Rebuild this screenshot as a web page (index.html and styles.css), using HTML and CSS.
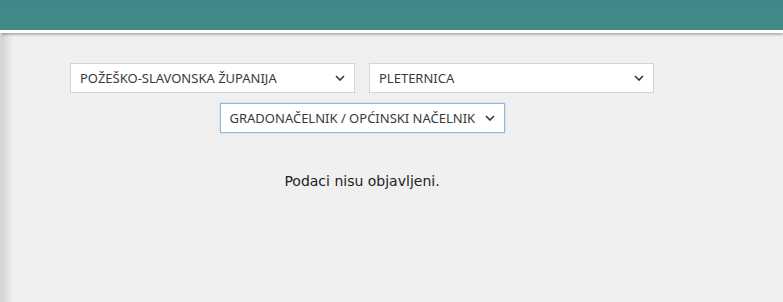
FILE: index.html
```html
<!DOCTYPE html>
<html lang="hr">
<head>
  <meta charset="UTF-8">
  <title>Podaci</title>
  <link rel="stylesheet" href="styles.css">
</head>
<body>
  <div class="topbar"></div>
  <div class="page">
    <div class="filters">
      <div class="row">
        <div class="select">
          <span>POŽEŠKO-SLAVONSKA ŽUPANIJA</span>
          <svg viewBox="0 0 10 6" width="10" height="6"><path d="M1 1l4 4 4-4" fill="none" stroke="#333" stroke-width="1.6"/></svg>
        </div>
        <div class="select">
          <span>PLETERNICA</span>
          <svg viewBox="0 0 10 6" width="10" height="6"><path d="M1 1l4 4 4-4" fill="none" stroke="#333" stroke-width="1.6"/></svg>
        </div>
      </div>
      <div class="row">
        <div class="select focused">
          <span>GRADONAČELNIK / OPĆINSKI NAČELNIK</span>
          <svg viewBox="0 0 10 6" width="10" height="6"><path d="M1 1l4 4 4-4" fill="none" stroke="#333" stroke-width="1.6"/></svg>
        </div>
      </div>
      <p class="message">Podaci nisu objavljeni.</p>
    </div>
  </div>
</body>
</html>
```

FILE: styles.css
```css
body {
  margin: 0;
  background: #f0f0f0;
  font-family: "DejaVu Sans", sans-serif;
  color: #222;
  height: 302px;
  overflow: hidden;
}

.topbar {
  height: 30px;
  background: linear-gradient(#438789, #3e8b86);
  border-bottom: 3px solid #fff;
  box-shadow: 0 2px 2px rgba(0, 0, 0, 0.25);
}

.page {
  height: 269px;
  box-shadow: inset 12px 0 10px -8px rgba(0, 0, 0, 0.15);
  border-left: 2px solid #d6d6d6;
}

.filters {
  width: 720px;
  padding-top: 30px;
  display: flex;
  flex-direction: column;
  align-items: center;
  gap: 10px;
}

.row {
  display: flex;
  gap: 14px;
}

.select {
  width: 285px;
  height: 30px;
  box-sizing: border-box;
  background: #fff;
  border: 1px solid #d4d4d4;
  display: flex;
  align-items: center;
  justify-content: space-between;
  padding: 0 9px 0 9px;
  font-family: "Noto Sans", sans-serif;
  font-size: 13px;
  color: #3a3a3a;
}

.select.focused {
  border-color: #8fb8dc;
  box-shadow: 0 0 2px #aecbe6;
}

.message {
  margin: 30px 0 0;
  font-size: 14px;
  color: #222;
}
```
